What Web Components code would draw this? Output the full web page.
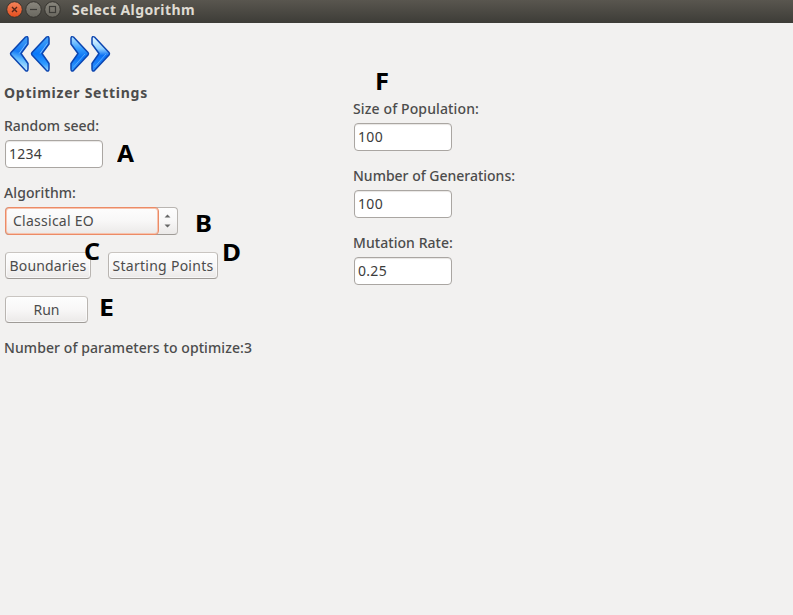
<!DOCTYPE html>
<html lang="en"><head><meta charset="utf-8"><title>Select Algorithm</title>
<style>body{margin:0;background:#f2f1f0;overflow:hidden}</style></head><body>
<algorithm-window></algorithm-window>
<script>
// Text line whose ink spans a set width; mode "scale" stretches, otherwise spacing is adjusted.
class FitText extends HTMLElement{
  connectedCallback(){
    const r=this.attachShadow({mode:'open'});
    r.innerHTML=`<style>:host{display:block;height:18px;line-height:18px;white-space:nowrap;font-family:"Noto Sans","Open Sans",sans-serif;font-size:14px}span{display:inline-block;transform-origin:0 50%}</style><span><slot></slot></span>`;
    const s=r.querySelector('span'),w=+this.getAttribute('w');
    this.style.width=w+'px';
    const n=this.textContent.length,m=s.getBoundingClientRect().width;
    if(this.hasAttribute('scale')) s.style.transform=`scaleX(${w/m})`;
    else s.style.letterSpacing=((w-m)/n)+'px';
  }
}
customElements.define('fit-text',FitText);
const define=(name,html)=>customElements.define(name,class extends HTMLElement{
  connectedCallback(){ if(!this.shadowRoot) this.attachShadow({mode:'open'}).innerHTML=html; }
});
define('text-entry',`<style>:host{display:flex;align-items:center;box-sizing:border-box;width:98px;height:28px;padding-left:3px;border:1px solid #aaa6a2;border-radius:4px;background:#fff;color:#3c3c3c;box-shadow:inset 0 1px 1px #e8e6e4}</style><slot></slot>`);
define('push-button',`<style>:host{display:flex;align-items:center;justify-content:center;box-sizing:border-box;height:27px;border:1px solid #b9b5b1;border-top-color:#c9c5c1;border-bottom-color:#9f9b97;border-radius:4px;background:linear-gradient(#fdfdfd,#f8f7f7 50%,#ebe9e8);box-shadow:inset 0 0 0 1px #ffffff99}</style><slot></slot>`);
define('combo-box',`<style>:host{display:flex;box-sizing:border-box;width:173px;height:28px;border:1px solid #b9b5b1;border-bottom-color:#9f9b97;border-radius:4px;background:linear-gradient(#fdfdfd,#f8f7f7 50%,#ebe9e8)}
div{box-sizing:border-box;width:154px;height:28px;margin:-1px 0 0 -1px;border:1px solid #ec8b66;box-shadow:inset 0 0 0 1px #f7c3ae;border-radius:4px;padding:4px 0 0 7px}svg{display:block;margin:5px 0 0 4px}</style><div><slot></slot></div><svg width="9" height="17"><path d="M1.5 4.6 4.5 1.6 7.5 4.6ZM1.5 11.4 4.5 14.4 7.5 11.4Z" fill="#666"/></svg>`);
define('title-bar',`<style>:host{display:flex;box-sizing:border-box;height:23px;background:linear-gradient(#59564f,#3d3c37);color:#dfdbd2;padding-left:6px;align-items:flex-start}svg{display:block;margin-top:1px;margin-right:10px}</style>
<svg width="56" height="18"><defs><linearGradient id="o" x2="0" y2="1"><stop stop-color="#f4845b"/><stop offset="1" stop-color="#e34e1e"/></linearGradient><linearGradient id="g" x2="0" y2="1"><stop stop-color="#8a877e"/><stop offset="1" stop-color="#69675f"/></linearGradient></defs>
<g stroke="#35332e"><circle cx="8.5" cy="8.5" r="7.8" fill="url(#o)"/><circle cx="27.5" cy="8.5" r="7.8" fill="url(#g)"/><circle cx="46.5" cy="8.5" r="7.8" fill="url(#g)"/></g>
<g fill="none" stroke="#3c3b37" stroke-width="1.2"><path d="m6 6 5 5m0-5-5 5" stroke="#54261a" stroke-width="1.4"/><path d="M24 8.5h7"/><rect x="43.5" y="5.5" width="6" height="6"/></g></svg><slot></slot>`);
define('nav-arrows',`<style>:host{display:block}svg{display:block}</style><svg width="42" height="38" viewBox="0 0 42 38"><defs>
<linearGradient id="a" x1=".6" x2=".45" y2="1"><stop stop-color="#3f9cf5"/><stop offset=".45" stop-color="#167bf5"/><stop offset=".65" stop-color="#60baff"/><stop offset="1" stop-color="#e5fbff"/></linearGradient><linearGradient id="b" x2="0" y2="1"><stop stop-color="#4aa5f7"/><stop offset=".5" stop-color="#0878fa"/><stop offset=".8" stop-color="#329cff"/><stop offset="1" stop-color="#9edcff"/></linearGradient></defs>
<g stroke-linejoin="round"><g stroke="#0b45b0" stroke-width="1.5"><path d="M16.3 2.2Q19 .6 19 3.5V9L12 18.5 19 28.5V33.5Q19 37.5 16.3 35.3L2 20Q1 18.7 2 17.4Z" fill="url(#a)"/><path d="M37.3 2.2Q40 .6 40 3.5V9L33 18.5 40 28.5V33.5Q40 37.5 37.3 35.3L23 20Q22 18.7 23 17.4Z" fill="url(#b)"/></g><path d="M17.3 8.5 10.2 18.5M38.3 8.5 31.2 18.5" fill="none" stroke="#76b9ff"/></g></svg>`);
// Right-pointing pair with its highlights along the upper edges.
define('nav-forward',`<style>:host{display:block}svg{display:block}</style><svg width="43" height="38" viewBox="0 0 43 38"><defs>
<linearGradient id="c" x2="0" y2="1"><stop stop-color="#b9e7ff"/><stop offset=".35" stop-color="#339cff"/><stop offset=".6" stop-color="#0872f4"/><stop offset="1" stop-color="#39a2ff"/></linearGradient><linearGradient id="d" x2="0" y2="1"><stop stop-color="#effdff"/><stop offset=".35" stop-color="#90d0ff"/><stop offset=".55" stop-color="#0b70f5"/><stop offset="1" stop-color="#2e94ff"/></linearGradient></defs>
<g stroke="#0b45b0" stroke-width="1.5" stroke-linejoin="round"><path d="M4.7 2.2Q2 .6 2 3.5V9L9 18.5 2 28.5V33.5Q2 37.5 4.7 35.3L19 20Q20 18.7 19 17.4Z" fill="url(#c)"/><path d="M25.7 2.2Q23 .6 23 3.5V9L30 18.5 23 28.5V33.5Q23 37.5 25.7 35.3L40 20Q41 18.7 40 17.4Z" fill="url(#d)"/></g><path d="m4.5 32 11.5-13M25.5 32 37 19" fill="none" stroke="#55a8ff"/></svg>`);
// Annotation letter laid over the form.
customElements.define('call-out',class extends HTMLElement{
 connectedCallback(){this.style.left=this.getAttribute('x')+'px';this.style.top=this.getAttribute('y')+'px';
 this.attachShadow({mode:'open'}).innerHTML=`<style>:host{position:absolute;color:#000}fit-text{font:bold 23px/24px "Noto Sans","Open Sans",sans-serif;height:24px}</style><fit-text scale w="${this.getAttribute('w')}">${this.textContent}</fit-text>`}});
define('algorithm-window',`<style>:host{display:block;position:relative;width:793px;height:615px;background:#f2f1f0;color:#4c4c4c}
.title{font-weight:bold;font-size:14px;margin-top:1px}.bar{display:flex;gap:18px;padding:12px 0 0 9px;height:49px;box-sizing:border-box}
.cols{display:grid;grid-template-columns:349px 1fr;padding-left:4px}.left{padding-top:12px}.right{padding-top:28px}
.head{font-weight:bold;margin-bottom:15px}.lab{margin-bottom:5px}.lab,.med{font-weight:500}text-entry{margin:0 0 16px 1px}combo-box{margin:0 0 17px 1px}
.row{display:flex;gap:17px;margin:0 0 17px 1px}.b1{width:86px}.b2{width:110px}.run{width:83px;margin:0 0 16px 1px}</style>
<title-bar><fit-text class="title" w="123">Select Algorithm</fit-text></title-bar>
<div class="bar"><nav-arrows></nav-arrows><nav-forward></nav-forward></div>
<div class="cols"><div class="left"><fit-text class="head" w="144">Optimizer Settings</fit-text>
<fit-text class="lab" w="95">Random seed:</fit-text><text-entry><fit-text w="33">1234</fit-text></text-entry>
<fit-text class="lab" w="72">Algorithm:</fit-text><combo-box><fit-text w="81">Classical EO</fit-text></combo-box>
<div class="row"><push-button class="b1"><fit-text w="77">Boundaries</fit-text></push-button><push-button class="b2"><fit-text w="101">Starting Points</fit-text></push-button></div>
<push-button class="run"><fit-text w="26">Run</fit-text></push-button><fit-text class="med" w="248">Number of parameters to optimize:3</fit-text></div>
<div class="right"><fit-text class="lab" w="126">Size of Population:</fit-text><text-entry><fit-text w="25">100</fit-text></text-entry>
<fit-text class="lab" w="162">Number of Generations:</fit-text><text-entry><fit-text w="25">100</fit-text></text-entry>
<fit-text class="lab" w="100">Mutation Rate:</fit-text><text-entry><fit-text w="29">0.25</fit-text></text-entry></div></div>
<call-out x="117" y="141" w="17">A</call-out><call-out x="195" y="211" w="17">B</call-out><call-out x="84" y="239" w="16">C</call-out><call-out x="222" y="240" w="19">D</call-out><call-out x="99" y="295" w="15">E</call-out><call-out x="375" y="69" w="14">F</call-out>`);
</script></body></html>
